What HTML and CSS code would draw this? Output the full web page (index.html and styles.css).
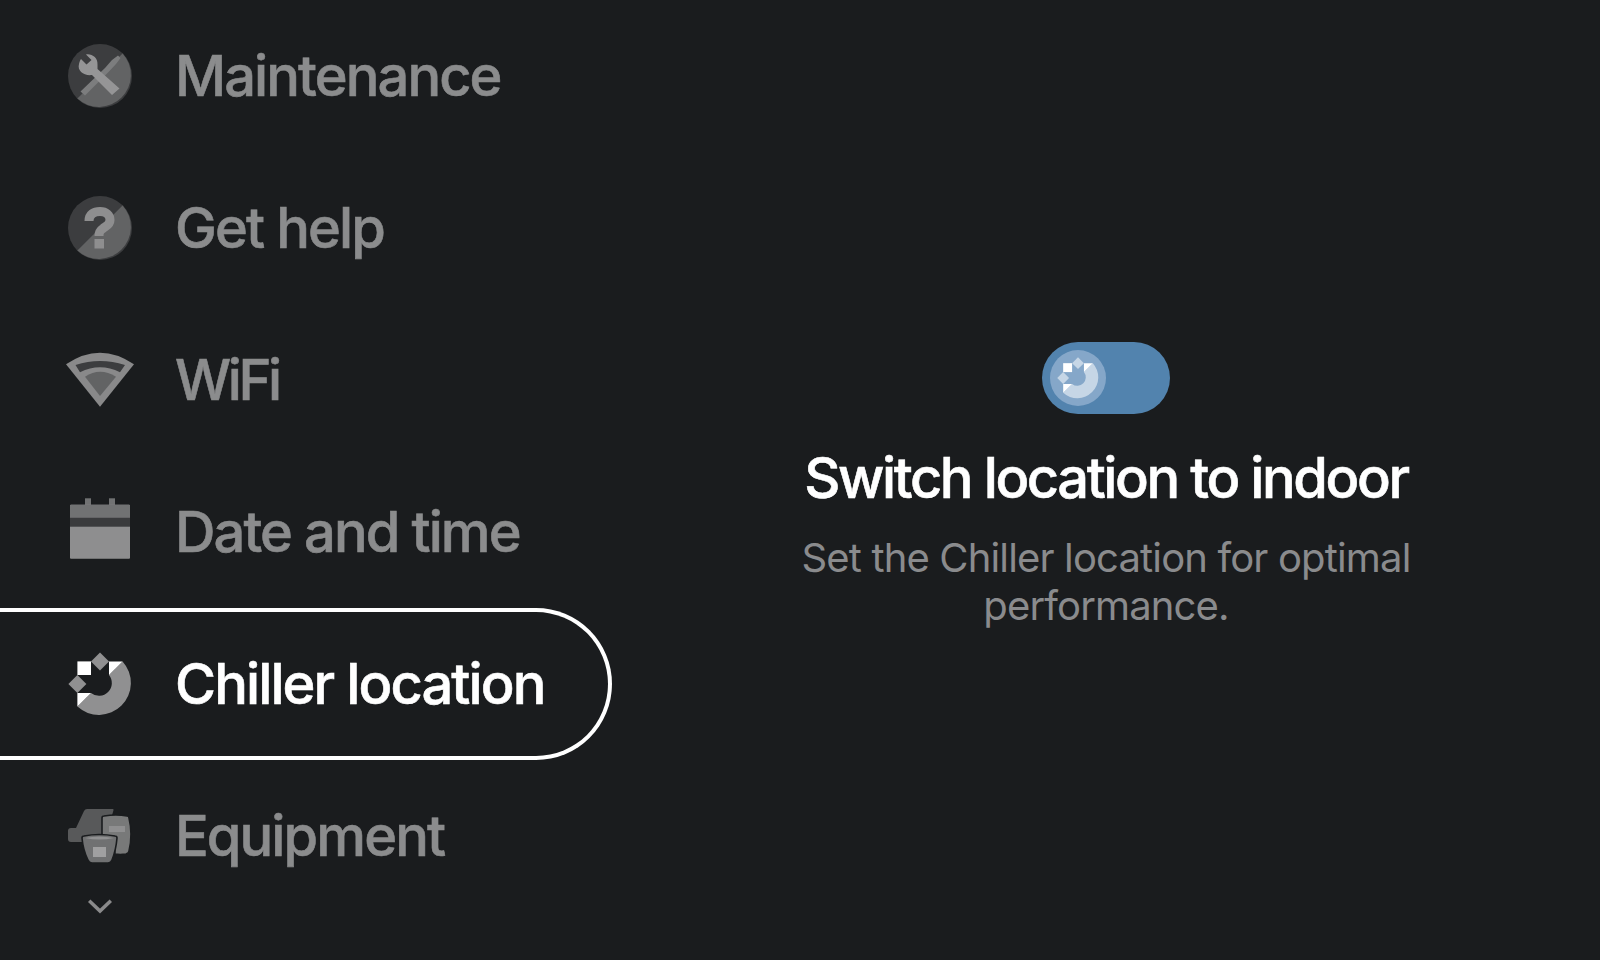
FILE: index.html
```html
<!DOCTYPE html>
<html lang="en">
<head>
<meta charset="utf-8">
<title>Chiller location</title>
<link rel="stylesheet" href="styles.css">
</head>
<body>
<div class="screen">
  <nav class="sidebar">
    <ul class="menu">
      <li class="item">
        <svg class="icon" viewBox="0 0 64 64">
          <circle cx="32" cy="32" r="32" fill="#3c3d3f"/>
          <path d="M54.6 9.4A32 32 0 0 1 9.4 54.6Z" fill="#626364"/>
          <path d="M12.5 47.5L37 24L44 16L50 11.5L52.5 14L48 20L41 27.5L17 51.500Z" fill="#7c7d7e"/>
          <path d="M13 15L18.5 20.5L23.5 16L18 10.5C24 9.5 30 14 29.5 20.5L29.5 25L51.5 44.5L44 51L24 31C16 32 9 27 11 20C11.5 18 12 16 13 15Z" fill="#959596"/>
        </svg>
        <span class="label">Maintenance</span>
      </li>
      <li class="item">
        <svg class="icon" viewBox="0 0 64 64">
          <circle cx="32" cy="32" r="32" fill="#3c3d3f"/>
          <path d="M54.6 9.4A32 32 0 0 1 9.4 54.6Z" fill="#626364"/>
          <path d="M21 25C21 18 26 15.5 32 15.5C38 15.5 42 19 42 24C42 29 38 30 35 32.5C32 34.5 31 36 31 40" fill="none" stroke="#8e8e8f" stroke-width="9"/>
          <rect x="26.5" y="43" width="9.5" height="9.5" fill="#8e8e8f"/>
        </svg>
        <span class="label">Get help</span>
      </li>
      <li class="item">
        <svg class="icon" viewBox="0 0 64 64">
          <path d="M-2 16.3Q32 -6.9 66 16.3L32 58.7Z" fill="#89898a"/>
          <path d="M7.5 17Q32 9 57 17L52 24.3Q32 14.3 12 24.3Z" fill="#3c3d3f"/>
          <path d="M17 28.7Q32 18.7 48 28.7L32 48Z" fill="#626364"/>
        </svg>
        <span class="label label-tight">WiFi</span>
      </li>
      <li class="item">
        <svg class="icon" viewBox="0 0 64 64">
          <rect x="17" y="-1.7" width="6" height="8" fill="#717273"/>
          <rect x="41" y="-1.7" width="6" height="8" fill="#717273"/>
          <rect x="2" y="4.7" width="60" height="54" rx="1" fill="#8e8e8f"/>
          <path d="M2 17.7V5.7A1 1 0 0 1 3 4.7H61A1 1 0 0 1 62 5.7V17.7Z" fill="#717273"/>
          <rect x="2" y="17.7" width="60" height="9" fill="#3a3b3d"/>
        </svg>
        <span class="label">Date and time</span>
      </li>
      <li class="item selected">
        <svg class="icon" viewBox="0 0 64 64">
          <path d="M54.6 9.4A32 32 0 0 1 9.4 54.6L23 41A12.8 12.8 0 0 0 41 23Z" fill="#909091"/>
          <path d="M41 9.4H54.6L41 23Z" fill="#fff"/>
          <path d="M9.4 41H23L9.4 54.6Z" fill="#fff"/>
          <rect x="9.4" y="9.4" width="13.6" height="13.6" fill="#fff"/>
          <path d="M32 0.4L41 9.4L32 18.4L23 9.4Z" fill="#909091"/>
          <path d="M9.4 23L18.4 32L9.4 41L0.4 32Z" fill="#909091"/>
        </svg>
        <span class="label">Chiller location</span>
      </li>
      <li class="item">
        <svg class="icon" viewBox="0 0 64 64">
          <path d="M0 27Q0 24 3 24H8L16 7Q17 5 19 5H45Q46 5 45 8L38 30V38H3Q0 38 0 35Z" fill="#58595a"/>
          <path d="M34 14Q34 12 36 12Q48 10 59 12Q61 12 61 14Q65 30 61 47Q61 49 58 50Q52 51 47 50L46 36H34Z" fill="#787979" stroke="#1a1c1e" stroke-width="1.600"/>
          <rect x="41" y="22" width="16" height="6" fill="#8f8f90"/>
          <path d="M14 34Q14 32 16 32Q31 29 47 32Q49 32 49 34Q48 46 44 56Q43 59 40 59H24Q21 59 20 56Q15 46 14 34Z" fill="#707172" stroke="#1a1c1e" stroke-width="1.600"/>
          <path d="M17 34Q31 31 46 34Q31 37 17 34Z" fill="#919192"/>
          <rect x="25" y="43" width="13" height="10" fill="#a0a0a1"/>
        </svg>
        <span class="label">Equipment</span>
      </li>
    </ul>
    <svg class="more" viewBox="0 0 24 12"><path d="M1.2 0.8L12 11L22.8 0.8" fill="none" stroke="#8a8a8b" stroke-width="3.5"/></svg>
  </nav>
  <main class="detail">
    <div class="toggle">
      <div class="knob">
        <svg class="knob-icon" viewBox="0 0 64 64">
          <path d="M54.6 9.4A32 32 0 0 1 9.4 54.6L23 41A12.8 12.8 0 0 0 41 23Z" fill="#c6d6e6"/>
          <path d="M41 9.4H54.6L41 23Z" fill="#fff"/>
          <path d="M9.4 41H23L9.4 54.6Z" fill="#fff"/>
          <rect x="9.4" y="9.4" width="13.6" height="13.6" fill="#fff"/>
          <path d="M32 0.4L41 9.4L32 18.4L23 9.4Z" fill="#c6d6e6"/>
          <path d="M9.4 23L18.4 32L9.4 41L0.4 32Z" fill="#c6d6e6"/>
        </svg>
      </div>
    </div>
    <h1 class="title">Switch location to indoor</h1>
    <p class="desc">Set the Chiller location for optimal performance.</p>
  </main>
</div>
</body>
</html>
```
FILE: styles.css
```css
* { box-sizing: border-box; }
html, body { margin: 0; height: 100%; }
body {
  background: #1a1c1e;
  font-family: Inter, "Liberation Sans", sans-serif;
  overflow: hidden;
}
.screen {
  display: flex;
  width: 1600px;
  height: 960px;
  overflow: hidden;
}
.sidebar {
  position: relative;
  flex: 0 0 612px;
}
.menu {
  list-style: none;
  margin: 0;
  padding: 0;
}
.item {
  display: flex;
  align-items: center;
  gap: 43px;
  height: 152px;
  padding-left: 68px;
  color: #8b8c8d;
  font-size: 56px;
  font-weight: 500;
  letter-spacing: -1.9px;
  -webkit-text-stroke: 0.6px currentColor;
  border-radius: 0 76px 76px 0;
}
.label-tight { letter-spacing: -3.4px; }
.selected {
  color: #fff;
  border: 4px solid #fff;
  border-left: 0;
}
.icon {
  flex: none;
  width: 64px;
  height: 64px;
  overflow: visible;
}
.more {
  position: absolute;
  left: 88px;
  top: 900px;
  width: 24px;
  height: 12px;
  overflow: visible;
}
.detail {
  flex: 1;
  display: flex;
  flex-direction: column;
  align-items: center;
  padding-top: 342px;
}
.toggle {
  display: flex;
  align-items: center;
  width: 128px;
  height: 72px;
  padding: 8px;
  border-radius: 36px;
  background: #5283ae;
}
.knob {
  display: flex;
  align-items: center;
  justify-content: center;
  width: 56px;
  height: 56px;
  border-radius: 50%;
  background: #85a7c9;
}
.knob-icon {
  width: 42px;
  height: 42px;
  overflow: visible;
}
.title {
  margin: 32px 0 0;
  color: #fff;
  font-size: 56px;
  line-height: 64px;
  font-weight: 500;
  letter-spacing: -2.4px;
  -webkit-text-stroke: 0.6px currentColor;
  text-align: center;
}
.desc {
  width: 640px;
  margin: 24px 0 0;
  color: #8a8b8d;
  font-size: 40px;
  line-height: 48px;
  font-weight: 400;
  letter-spacing: -0.85px;
  text-align: center;
}
```
